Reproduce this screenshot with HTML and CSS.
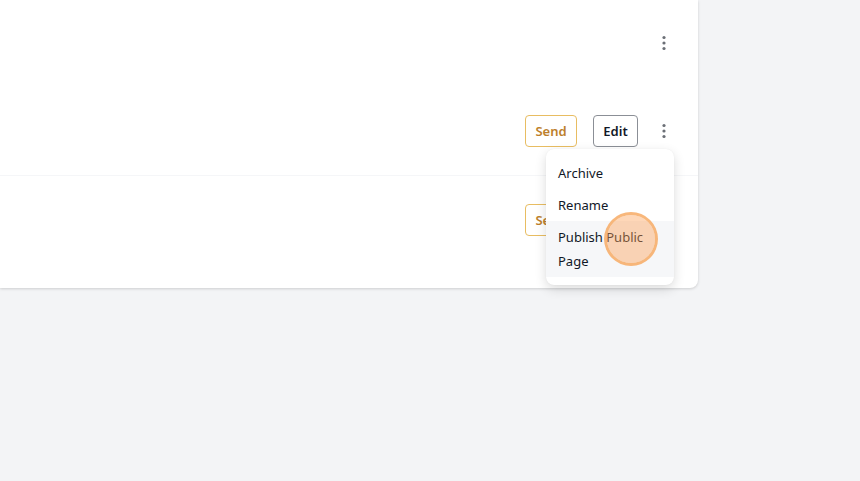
FILE: index.html
```html
<!DOCTYPE html>
<html lang="en">
<head>
    <meta charset="UTF-8">
    <meta name="viewport" content="width=device-width, initial-scale=1.0">
    <title>Pages</title>
    <link rel="stylesheet" href="styles.css">
</head>
<body>

<div class="card">
    <div class="row row-first">
        <button class="more">
            <svg width="16" height="16" viewBox="0 0 16 16"><circle cx="8" cy="2.5" r="1.6"/><circle cx="8" cy="8" r="1.6"/><circle cx="8" cy="13.5" r="1.6"/></svg>
        </button>
    </div>

    <div class="row row-open">
        <button class="btn btn-send">Send</button>
        <button class="btn btn-edit">Edit</button>
        <button class="more">
            <svg width="16" height="16" viewBox="0 0 16 16"><circle cx="8" cy="2.5" r="1.6"/><circle cx="8" cy="8" r="1.6"/><circle cx="8" cy="13.5" r="1.6"/></svg>
        </button>

        <!-- Dropdown for the open row -->
        <ul class="menu">
            <li>Archive</li>
            <li>Rename</li>
            <li class="active">Publish Public Page</li>
        </ul>
    </div>

    <div class="row row-last">
        <button class="btn btn-send">Send</button>
        <button class="btn btn-edit">Edit</button>
        <button class="more">
            <svg width="16" height="16" viewBox="0 0 16 16"><circle cx="8" cy="2.5" r="1.6"/><circle cx="8" cy="8" r="1.6"/><circle cx="8" cy="13.5" r="1.6"/></svg>
        </button>
    </div>
</div>

<!-- Click marker -->
<div class="click-marker"></div>

</body>
</html>
```

FILE: styles.css
```css
html, body {
    height: 100%;
}
body {
    font-family: "Noto Sans", "Open Sans", sans-serif;
    margin: 0;
    padding: 0;
    background-color: #f3f4f6;
    overflow: hidden;
}
.card {
    width: 698px;
    height: 288px;
    background-color: #fff;
    border-bottom-right-radius: 8px;
    box-shadow: 0 1px 3px rgba(0, 0, 0, 0.16);
}
.row {
    display: flex;
    align-items: flex-start;
    justify-content: flex-end;
    box-sizing: border-box;
    position: relative;
    padding-right: 22px;
}
.row-first {
    height: 88px;
    padding-top: 27px;
}
.row-open {
    height: 88px;
    padding-top: 27px;
    border-bottom: 1px solid #f5f6f8;
}
.row-last {
    height: 112px;
    padding-top: 28px;
}
.btn {
    height: 32px;
    padding: 0;
    font-family: inherit;
    font-size: 13px;
    font-weight: 600;
    background-color: #fff;
    border-radius: 4px;
    cursor: pointer;
}
.btn-send {
    width: 52px;
    margin-right: 16px;
    color: #bd7f2c;
    border: 1px solid #e8bd62;
}
.btn-edit {
    width: 45px;
    margin-right: 14px;
    color: #111827;
    border: 1px solid #8b8f96;
}
.more {
    width: 24px;
    height: 32px;
    padding: 0;
    display: flex;
    align-items: center;
    justify-content: center;
    background: none;
    border: none;
    cursor: pointer;
}
.more svg {
    fill: #6b6f76;
}
.menu {
    position: absolute;
    top: 61px;
    right: 24px;
    width: 128px;
    box-sizing: border-box;
    margin: 0;
    padding: 8px 0;
    list-style: none;
    background-color: #fff;
    border-radius: 8px;
    box-shadow: 0 4px 12px rgba(0, 0, 0, 0.14), 0 0 1px rgba(0, 0, 0, 0.08);
    z-index: 2;
}
.menu li {
    padding: 4px 12px;
    font-size: 13px;
    line-height: 24px;
    color: #111827;
}
.menu .active {
    background-color: #f6f7f9;
}
.click-marker {
    position: absolute;
    left: 604px;
    top: 212px;
    width: 54px;
    height: 54px;
    box-sizing: border-box;
    border: 3px solid rgba(247, 170, 100, 0.85);
    border-radius: 50%;
    background-color: rgba(252, 160, 85, 0.42);
    background-clip: padding-box;
    z-index: 3;
}
```
